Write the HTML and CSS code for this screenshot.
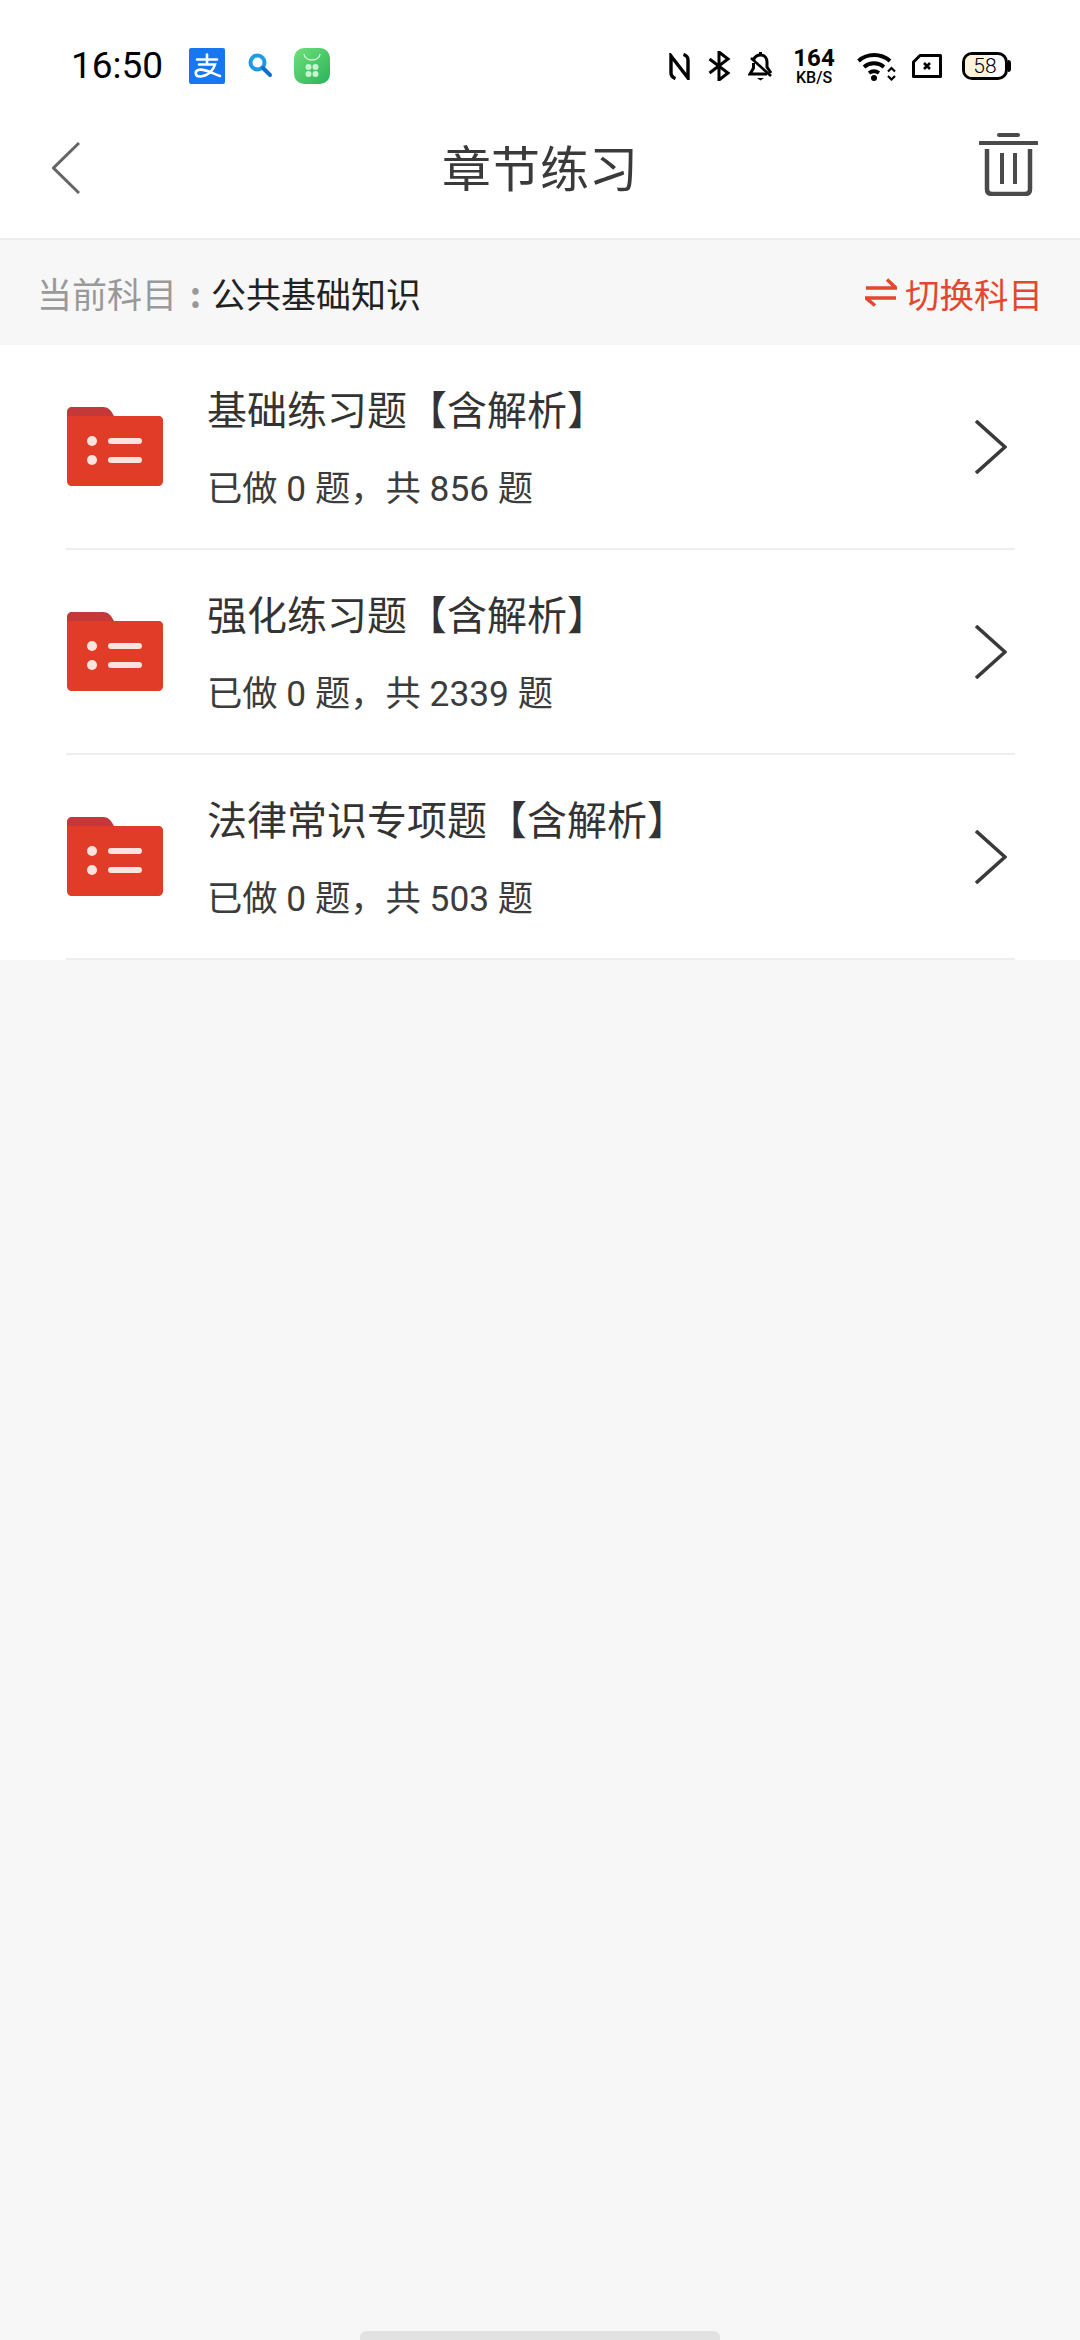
FILE: index.html
```html
<!DOCTYPE html>
<html lang="zh-CN">
<head>
  <meta charset="UTF-8">
  <meta name="viewport" content="width=device-width, initial-scale=1.0">
  <title>章节练习</title>
  <link rel="stylesheet" href="styles.css">
</head>
<body>
  <div class="page">
    <!-- Status bar -->
    <div class="status-bar">
      <span class="status-time">16:50</span>
      <svg class="app-icon alipay" viewBox="0 0 36 36">
        <rect width="36" height="36" rx="2" fill="#1677f0"/>
        <path d="M8 11.500H28M18 6.500V16M10 16.500H26C24.500 22 19 28 11.500 28.500C6 28.800 5 23 10 21.800C15 20.500 23 25 31 28" fill="none" stroke="#fff" stroke-width="2.600" stroke-linecap="round"/>
      </svg>
      <svg class="app-icon search" viewBox="0 0 36 36">
        <circle cx="15.500" cy="14.500" r="7" fill="none" stroke="#1e9be8" stroke-width="4"/>
        <path d="M21 20L28 27" stroke="#0c6fd0" stroke-width="4" stroke-linecap="round"/>
      </svg>
      <svg class="app-icon store" viewBox="0 0 36 36">
        <defs>
          <linearGradient id="storeFill" x1="0" y1="0" x2="1" y2="1">
            <stop offset="0" stop-color="#6fe07a"/>
            <stop offset="1" stop-color="#2ab35a"/>
          </linearGradient>
        </defs>
        <rect width="36" height="36" rx="10" fill="url(#storeFill)"/>
        <path d="M10 6C11 14 25 14 26 6" fill="none" stroke="#d8f7dc" stroke-width="1.400"/>
        <g fill="#c8f3cf">
          <circle cx="14.500" cy="19" r="3"/><circle cx="21.500" cy="19" r="3"/>
          <circle cx="14.500" cy="26" r="3"/><circle cx="21.500" cy="26" r="3"/>
        </g>
      </svg>

      <div class="status-right">
        <svg class="sys-icon nfc" viewBox="0 0 21 27">
          <path d="M6.500 25.500C3.500 24.500 2 22.500 2 20V3L19 25V7C19 4.500 17.500 2.500 14.500 1.500" fill="none" stroke="#000" stroke-width="3.400"/>
        </svg>
        <svg class="sys-icon bt" viewBox="0 0 23 30">
          <path d="M1.500 8L20 22L11 29V1L20 8L1.500 22" fill="none" stroke="#000" stroke-width="3"/>
        </svg>
        <svg class="sys-icon bell" viewBox="0 0 25 30">
          <path d="M12.500 1V4M5.500 9C7 5 10 4 12.500 4C17 4 19 7.500 19 11V16L23 22M5.500 12V17L2 23H19" fill="none" stroke="#000" stroke-width="3"/>
          <path d="M9 27H16L12.500 29.500Z" fill="#000"/>
          <path d="M3 7L23 25" stroke="#000" stroke-width="2.600"/>
        </svg>
        <div class="net-speed">
          <span class="net-value">164</span>
          <span class="net-unit">KB/S</span>
        </div>
        <svg class="sys-icon wifi" viewBox="0 0 40 29">
          <path d="M1.500 9C10 1 24 1 33 9M7 15C13 10 21 10 27 15M12 21C15.500 18.500 18.500 18.500 22 21" fill="none" stroke="#000" stroke-width="3.800"/>
          <circle cx="17" cy="26" r="3" fill="#000"/>
          <path d="M31 19.500L34.500 16L38 19.500M31 24L34.500 27.500L38 24" fill="none" stroke="#000" stroke-width="2.200"/>
        </svg>
        <svg class="sys-icon sim" viewBox="0 0 30 24">
          <path d="M8 1.500H28.500V22.500H1.500V8Z" fill="none" stroke="#000" stroke-width="3" stroke-linejoin="round"/>
          <path d="M12 9L18 15M18 9L12 15" stroke="#000" stroke-width="2.600"/>
        </svg>
        <div class="battery">
          <div class="battery-body"><span class="battery-fill"></span><span class="battery-text">58</span></div>
          <span class="battery-tip"></span>
        </div>
      </div>
    </div>

    <!-- Header -->
    <div class="nav-bar">
      <div class="nav-side">
        <svg class="nav-back" viewBox="0 0 28 52">
          <path d="M27 1L1.500 26L27 51" fill="none" stroke="#666" stroke-width="3"/>
        </svg>
      </div>
      <h1 class="nav-title">章节练习</h1>
      <div class="nav-side nav-side-right">
        <svg class="nav-trash" viewBox="0 0 59 63">
          <path d="M20 2H39" stroke="#4a4a4a" stroke-width="4" stroke-linecap="round"/>
          <path d="M1 10H58" stroke="#4a4a4a" stroke-width="4" stroke-linecap="round"/>
          <path d="M8 16V56C8 59.500 9.500 61 13 61H46C49.500 61 51 59.500 51 56V16" fill="none" stroke="#4a4a4a" stroke-width="4.500"/>
          <path d="M23 20V51M36 20V51" stroke="#4a4a4a" stroke-width="4"/>
        </svg>
      </div>
    </div>

    <!-- Current subject -->
    <div class="subject-bar">
      <div class="subject-info">
        <span class="subject-label">当前科目</span>
        <span class="subject-colon">:</span>
        <span class="subject-name">公共基础知识</span>
      </div>
      <div class="subject-switch">
        <svg class="switch-icon" viewBox="0 0 32 29">
          <path d="M1 10H31L22 1.500" fill="none" stroke="#e4472f" stroke-width="3.400"/>
          <path d="M31 20H1L10 27.500" fill="none" stroke="#e4472f" stroke-width="3.400"/>
        </svg>
        <span>切换科目</span>
      </div>
    </div>

    <!-- Chapter list -->
    <div class="chapter-list">
      <div class="chapter-row">
        <svg class="chapter-icon" viewBox="0 0 96 79"><use href="#folderIcon"/></svg>
        <div class="chapter-text">
          <div class="chapter-title">基础练习题【含解析】</div>
          <div class="chapter-count">已做 0 题，共 856 题</div>
        </div>
        <svg class="chapter-arrow" viewBox="0 0 32 54"><use href="#arrowIcon"/></svg>
      </div>
      <div class="chapter-row">
        <svg class="chapter-icon" viewBox="0 0 96 79"><use href="#folderIcon"/></svg>
        <div class="chapter-text">
          <div class="chapter-title">强化练习题【含解析】</div>
          <div class="chapter-count">已做 0 题，共 2339 题</div>
        </div>
        <svg class="chapter-arrow" viewBox="0 0 32 54"><use href="#arrowIcon"/></svg>
      </div>
      <div class="chapter-row">
        <svg class="chapter-icon" viewBox="0 0 96 79"><use href="#folderIcon"/></svg>
        <div class="chapter-text">
          <div class="chapter-title">法律常识专项题【含解析】</div>
          <div class="chapter-count">已做 0 题，共 503 题</div>
        </div>
        <svg class="chapter-arrow" viewBox="0 0 32 54"><use href="#arrowIcon"/></svg>
      </div>
    </div>

    <div class="home-bar"></div>
  </div>

  <!-- Shared icons -->
  <svg class="icon-defs" width="0" height="0">
    <defs>
      <g id="folderIcon">
        <path d="M0 18V5C0 2 2 0 5 0H36C41 0 44 3 47 9H91C94 9 96 11 96 14V18Z" fill="#c4383a"/>
        <path d="M0 9H91C94 9 96 11 96 14V74C96 77 94 79 91 79H5C2 79 0 77 0 74Z" fill="#e03c27"/>
        <circle cx="25" cy="34" r="5" fill="#fde3de"/>
        <circle cx="25" cy="53" r="5" fill="#fde3de"/>
        <rect x="41" y="31" width="34" height="6" rx="3" fill="#fde3de"/>
        <rect x="41" y="50" width="34" height="6" rx="3" fill="#fde3de"/>
      </g>
      <path id="arrowIcon" d="M1 1L30 27L1 53" fill="none" stroke="#3a3a3a" stroke-width="3.600"/>
    </defs>
  </svg>
</body>
</html>
```

FILE: styles.css
```css
:root {
  --page-bg: #f7f7f7;
  --line: #eeeeee;
  --text: #333333;
  --accent: #e4472f;
}

* {
  box-sizing: border-box;
}

body, html {
  margin: 0;
  padding: 0;
  background-color: var(--page-bg);
  font-family: "Roboto", "Noto Sans CJK SC", sans-serif;
  color: var(--text);
}

.page {
  display: flex;
  flex-direction: column;
  height: 2340px;
  overflow: hidden;
}

.icon-defs {
  display: block;
  height: 0;
}

/* Status bar */
.status-bar {
  display: flex;
  align-items: flex-start;
  height: 90px;
  padding: 48px 69px 0 71px;
  background: #fff;
  color: #000;
}

.status-time {
  width: 118px;
  font-size: 37px;
  line-height: 36px;
}

.app-icon {
  display: block;
  width: 36px;
  height: 36px;
}

.search {
  margin-left: 17px;
}

.store {
  margin-left: 16px;
}

.status-right {
  display: flex;
  align-items: flex-start;
  margin-left: auto;
}

.sys-icon {
  display: block;
  flex: none;
}

.nfc {
  width: 21px;
  height: 27px;
  margin-top: 5px;
}

.bt {
  width: 23px;
  height: 30px;
  margin: 3px 0 0 18px;
}

.bell {
  width: 25px;
  height: 30px;
  margin: 3px 0 0 17px;
}

.net-speed {
  display: flex;
  flex-direction: column;
  align-items: center;
  width: 42px;
  margin-left: 20px;
  font-weight: 700;
}

.net-value {
  font-size: 24px;
  line-height: 20px;
}

.net-unit {
  margin-top: 2px;
  font-size: 16px;
  line-height: 15px;
  font-weight: 500;
}

.wifi {
  width: 40px;
  height: 29px;
  margin: 4px 0 0 22px;
}

.sim {
  width: 30px;
  height: 24px;
  margin: 6px 0 0 15px;
}

.battery {
  display: flex;
  align-items: center;
  height: 28px;
  margin: 4px 0 0 20px;
}

.battery-body {
  position: relative;
  display: flex;
  align-items: center;
  justify-content: center;
  width: 46px;
  height: 28px;
  border: 3.5px solid #000;
  border-radius: 10px;
  overflow: hidden;
}

.battery-fill {
  position: absolute;
  left: 0;
  top: 0;
  bottom: 0;
  width: 58%;
  background: #fdf3da;
}

.battery-text {
  position: relative;
  font-size: 21px;
  line-height: 21px;
  font-weight: 300;
}

.battery-tip {
  width: 3px;
  height: 12px;
  background: #000;
  border-radius: 0 3px 3px 0;
}

/* Header */
.nav-bar {
  display: flex;
  align-items: center;
  justify-content: space-between;
  height: 150px;
  padding: 0 42px 0 52px;
  background: #fff;
  border-bottom: 2px solid #ececec;
}

.nav-side {
  display: flex;
  width: 150px;
}

.nav-side-right {
  justify-content: flex-end;
}

.nav-back {
  width: 28px;
  height: 52px;
  margin-top: 8px;
}

.nav-title {
  margin: 3px 0 0;
  font-family: "Noto Sans CJK SC", sans-serif;
  font-size: 49px;
  font-weight: 400;
  line-height: 60px;
  color: #3a3a3a;
  transform: translateX(-5px);
}

.nav-trash {
  width: 59px;
  height: 63px;
  margin-top: 0;
}

/* Current subject */
.subject-bar {
  display: flex;
  align-items: center;
  justify-content: space-between;
  height: 105px;
  padding: 0 37px 0 37px;
  background: var(--page-bg);
  font-family: "Noto Sans CJK SC", sans-serif;
  font-size: 35px;
  line-height: 44px;
}

.subject-info {
  display: flex;
  align-items: center;
}

.subject-label {
  color: #999;
}

.subject-colon {
  width: 31px;
  margin-left: 3px;
  text-align: center;
  font-weight: 700;
  color: #999;
}

.subject-name {
  color: #222;
}

.subject-switch {
  display: flex;
  align-items: center;
  gap: 8px;
  font-size: 34.5px;
  color: var(--accent);
}

.switch-icon {
  display: block;
  width: 32px;
  height: 29px;
}

/* Chapter list */
.chapter-list {
  background: #fff;
  padding: 0 65px 0 66px;
}

.chapter-row {
  display: flex;
  align-items: center;
  height: 205px;
  padding: 0 8px 0 1px;
  border-bottom: 2px solid var(--line);
}

.chapter-icon {
  display: block;
  flex: none;
  width: 96px;
  height: 79px;
  margin-right: 44px;
}

.chapter-text {
  flex: 1;
  padding-top: 4px;
}

.chapter-title {
  font-size: 40px;
  line-height: 50px;
  color: #333;
}

.chapter-count {
  margin-top: 31px;
  font-size: 35.3px;
  line-height: 42px;
  color: #3c3c3c;
}

.chapter-arrow {
  display: block;
  flex: none;
  width: 32px;
  height: 54px;
}

/* Home indicator */
.home-bar {
  flex: none;
  align-self: center;
  width: 360px;
  height: 9px;
  margin-top: auto;
  background: #e2e2e2;
  border-radius: 6px 6px 0 0;
}
```
